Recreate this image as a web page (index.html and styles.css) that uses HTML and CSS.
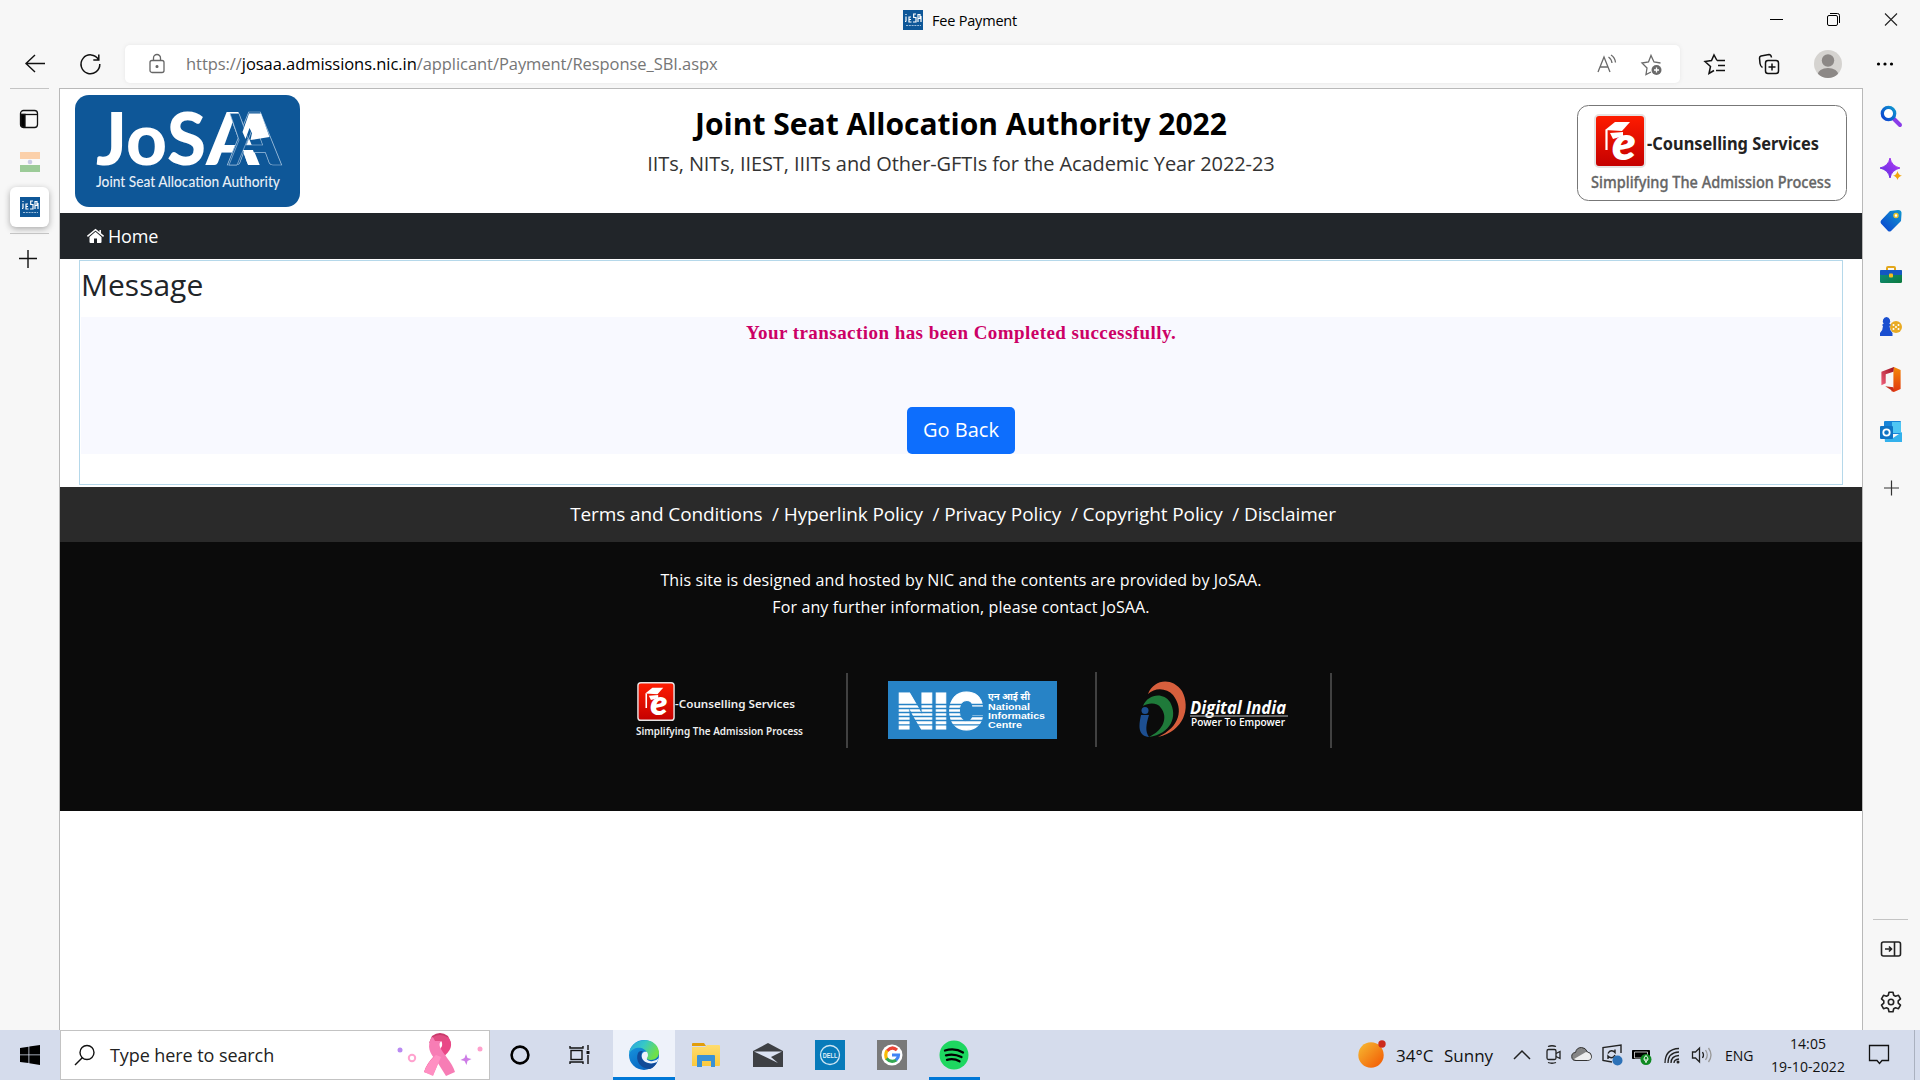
FILE: index.html
```html
<!DOCTYPE html>
<html lang="en">
<head>
<meta charset="utf-8">
<title>Fee Payment</title>
<link rel="stylesheet" href="styles.css">
</head>
<body>
<svg class="defs" width="0" height="0" aria-hidden="true">
  <defs>
    <linearGradient id="red" x1="0" y1="0" x2="0" y2="1"><stop offset="0" stop-color="#ff1c00"/><stop offset="1" stop-color="#c40000"/></linearGradient>
    <linearGradient id="blue" x1="0" y1="1" x2="1" y2="0"><stop offset="0" stop-color="#0a3fd0"/><stop offset="1" stop-color="#1098cf"/></linearGradient>
    <linearGradient id="purple" x1="0" y1="1" x2="1" y2="0"><stop offset="0" stop-color="#5b2be0"/><stop offset="1" stop-color="#b73cf5"/></linearGradient>
    <linearGradient id="green" x1="0" y1="0" x2="1" y2="1"><stop offset="0" stop-color="#0f8f88"/><stop offset="1" stop-color="#0c7a3c"/></linearGradient>
    <linearGradient id="office" x1="0" y1="0" x2="0" y2="1"><stop offset="0" stop-color="#f58a07"/><stop offset="1" stop-color="#e0360f"/></linearGradient>
    <linearGradient id="officeDark" x1="1" y1="0" x2="0" y2="1"><stop offset="0" stop-color="#9c0f1e"/><stop offset="1" stop-color="#f0607c"/></linearGradient>
    <linearGradient id="sun" x1="0" y1="0" x2="1" y2="1"><stop offset="0.1" stop-color="#f6b22e"/><stop offset="0.8" stop-color="#f3690b"/></linearGradient>
    <linearGradient id="edgeTop" x1="0" y1="0" x2="1" y2="0.4"><stop offset="0" stop-color="#2a9fe0"/><stop offset="0.5" stop-color="#36c8c8"/><stop offset="1" stop-color="#6fe04a"/></linearGradient>
    <linearGradient id="edgeLeft" x1="0" y1="0" x2="0.6" y2="1"><stop offset="0" stop-color="#1b9de2"/><stop offset="1" stop-color="#0663c0"/></linearGradient>
    <linearGradient id="folder" x1="0" y1="0" x2="0" y2="1"><stop offset="0" stop-color="#ffdc6e"/><stop offset="1" stop-color="#fbc93d"/></linearGradient>
    <linearGradient id="ribbon" x1="0" y1="0" x2="1" y2="1"><stop offset="0" stop-color="#fb86bd"/><stop offset="1" stop-color="#fb6faf"/></linearGradient>
    <symbol id="favicon" viewBox="0 0 20 20">
      <rect width="20" height="20" fill="#0e5798"/>
      <path d="M3 4v1M3 6.500v5M8 7H6v5h2.500M6 9.500h2M13 4h-2.300v3.500h2.300V12h-3M15 4v8M15 4.500h2v4h-2M18 6v6M2 11.500h1" stroke="#fff" stroke-width="1.200" fill="none"/>
      <path d="M3 15.500h15" stroke="#9dbedc" stroke-width="1" stroke-dasharray="2 0.800"/>
    </symbol>
    <symbol id="gradcap" viewBox="0 0 52 54">
      <rect x="1" y="1" width="50" height="52" rx="4" fill="url(#red)" stroke="#e6e3e3" stroke-width="2"/>
      <path d="M11 16L21 8h15l-8 9z" fill="#fff"/>
      <path d="M12.500 16v20" stroke="#fff" stroke-width="2.200"/>
      <path d="M16 19l13-1v4l-10 3z" fill="#fff"/>
      <text x="18" y="46" font-family="Lato, sans-serif" font-style="italic" font-weight="800" font-size="47" fill="#fff" textLength="24" lengthAdjust="spacingAndGlyphs">e</text>
    </symbol>
  </defs>
</svg>

<header class="titlebar">
  <div class="page-title"><svg width="20" height="20"><use href="#favicon"/></svg><span>Fee Payment</span></div>
  <div class="window-buttons">
    <svg width="57" height="40" viewBox="0 0 57 40"><path d="M22 19.500h13" stroke="#000"/></svg>
    <svg width="57" height="40" viewBox="0 0 57 40" fill="none" stroke="#000"><rect x="22.500" y="15.500" width="10" height="10" rx="1.500"/><path d="M25 13.500h7.500q2 0 2 2V23"/></svg>
    <svg width="58" height="40" viewBox="0 0 58 40"><path d="M23 13.500l12 12M35 13.500l-12 12" stroke="#222" stroke-width="1.100"/></svg>
  </div>
</header>

<div class="toolbar">
  <svg class="back" width="24" height="24" viewBox="0 0 24 24" fill="none" stroke="#111" stroke-width="1.400"><path d="M23 11.500H3.500M13 3L4 11.500l9 8.500"/></svg>
  <svg class="reload" width="24" height="24" viewBox="0 0 24 24" fill="none" stroke="#111" stroke-width="1.500"><path d="M20.500 7.500A9.400 9.400 0 1 0 21.800 12M20.800 2.500v5.500h-5.500"/></svg>
  <div class="address">
    <svg class="lock" width="18" height="20" viewBox="0 0 18 20" fill="none" stroke="#666" stroke-width="1.300"><rect x="2" y="6.500" width="14" height="12" rx="2"/><path d="M5.500 6.500V4a3.500 3.500 0 0 1 7 0v2.500"/><circle cx="9" cy="12.500" r="0.900" fill="#666"/></svg>
    <span class="url">https://<b>josaa.admissions.nic.in</b>/applicant/Payment/Response_SBI.aspx</span>
    <svg class="read" width="22" height="22" viewBox="0 0 22 22" fill="none" stroke="#6a6a6a" stroke-width="1.300"><path d="M2 19L8 4l6 15M4 14h8M12.500 4q3 2 3.500 6M15 2q4 2.500 4.500 7.500"/></svg>
    <svg width="24" height="24" viewBox="0 0 24 24" fill="none" stroke="#6a6a6a" stroke-width="1.300"><path d="M12 20l-5 2.500 1-6.500L3 11l6.500-1L12 3.500l3 6.500 6.500 1"/><circle cx="17.500" cy="18" r="5" fill="#6a6a6a" stroke="none"/><path d="M15 18h5M17.500 15.500v5" stroke="#fff"/></svg>
  </div>
  <svg class="fav" width="24" height="24" viewBox="0 0 24 24" fill="none" stroke="#111" stroke-width="1.500"><path d="M12 18.500l-5 3 1.500-7L3 9.500l6.500-1L12 3l3 5.500M15 8.500h8M16 13.500h7M14 18.500h9"/></svg>
  <svg class="coll" width="24" height="24" viewBox="0 0 24 24" fill="none" stroke="#111" stroke-width="1.500"><rect x="8.500" y="8.500" width="13" height="13" rx="2.500"/><path d="M15 11.500v7M11.500 15h7M5.500 15.500q-2-1-2.500-4L2.500 6Q2.500 4.500 4 4L12 2.500q2 0 2.500 3"/></svg>
  <svg class="avatar" width="28" height="28" viewBox="0 0 28 28"><defs><clipPath id="av"><circle cx="14" cy="14" r="14"/></clipPath></defs><g clip-path="url(#av)"><rect width="28" height="28" fill="#d5d3d0"/><circle cx="14" cy="10.500" r="6.200" fill="#8c8886"/><ellipse cx="14" cy="25" rx="10.500" ry="7" fill="#8c8886"/></g></svg>
  <svg class="more" width="18" height="6" viewBox="0 0 18 6"><circle cx="2.500" cy="3" r="1.600"/><circle cx="9" cy="3" r="1.600"/><circle cx="15.500" cy="3" r="1.600"/></svg>
</div>

<div class="workspace">
  <aside class="tabs">
    <hr>
    <svg class="tab-toggle" width="20" height="20" viewBox="0 0 20 20" fill="none" stroke="#111" stroke-width="1.300"><rect x="1.500" y="1.500" width="17" height="17" rx="3"/><path d="M2 5.500h16.500"/><path d="M2 5.500h4V18H4q-2 0-2-2z" fill="#000"/></svg>
    <svg class="flag" width="20" height="20"><rect width="20" height="7" fill="#fbd0aa"/><rect y="7" width="20" height="6" fill="#fafafa"/><rect y="13" width="20" height="7" fill="#9ccb98"/><circle cx="10" cy="10" r="2.300" fill="#c9cae4"/></svg>
    <div class="active-tab"><svg width="20" height="20"><use href="#favicon"/></svg></div>
    <hr>
    <svg class="new-tab" width="18" height="18" viewBox="0 0 18 18"><path d="M0 8.500h18M9 0v18" stroke="#111" stroke-width="1.400"/></svg>
  </aside>

  <main class="site">
    <div class="site-header">
      <svg class="josaa" width="225" height="112" viewBox="75 95 225 112">
        <rect x="75" y="95" width="225" height="112" rx="14" fill="#0e5798"/>
        <g font-family="Lato, sans-serif" font-weight="900" font-size="73" fill="#fff">
          <text y="165"><tspan x="96" textLength="31" lengthAdjust="spacingAndGlyphs">J</tspan><tspan x="126" textLength="41" lengthAdjust="spacingAndGlyphs">o</tspan><tspan x="167" textLength="39" lengthAdjust="spacingAndGlyphs">S</tspan><tspan x="206" textLength="53" lengthAdjust="spacingAndGlyphs">A</tspan></text>
          <text x="228" y="165" textLength="53" lengthAdjust="spacingAndGlyphs" fill="#0e5798" stroke="#9fbfdc" stroke-width=".7">A</text>
          <path d="M230 113.500h9l9 25-11 26.500h-8l10-25z" fill="#0e5798" stroke="#9fbfdc" stroke-width=".7"/>
          <path d="M249 113.500h12l8.500 23.500-19 3 1.500-7-2.500-5-4 11-3-7z"/>
          <path d="M243 150h10l5 15h-10z"/>
        </g>
        <text x="96" y="187" font-family="Lato, sans-serif" font-size="14.500" font-weight="500" fill="#e6eef6" textLength="184" lengthAdjust="spacingAndGlyphs">Joint Seat Allocation Authority</text>
      </svg>
      <div class="site-name">
        <h1>Joint Seat Allocation Authority 2022</h1>
        <p>IITs, NITs, IIEST, IIITs and Other-GFTIs for the Academic Year 2022-23</p>
      </div>
      <svg class="ecs" width="270" height="96" viewBox="1577 105 270 96">
        <rect x="1577.500" y="105.500" width="269" height="95" rx="11" fill="#fff" stroke="#777"/>
        <use href="#gradcap" x="1594" y="114" width="52" height="54"/>
        <text x="1647" y="150" font-family="Noto Sans, sans-serif" font-weight="700" font-size="17" fill="#222" textLength="172" lengthAdjust="spacingAndGlyphs">-Counselling Services</text>
        <text x="1591" y="188" font-family="Noto Sans, sans-serif" font-weight="500" font-size="15.500" fill="#666" stroke="#666" stroke-width=".3" textLength="240" lengthAdjust="spacingAndGlyphs">Simplifying The Admission Process</text>
      </svg>
    </div>
    <nav class="site-nav">
      <svg width="17" height="14" viewBox="0 0 17 14" fill="#fff"><path d="M8.500 2.800L2.500 8v5q0 1 1 1H7V9.500h3V14h3.500q1 0 1-1V8z"/><path d="M0.400 7.300L8.500 0.700l8.100 6.600M13.200 1v3" fill="none" stroke="#fff" stroke-width="1.500"/></svg>
      <span>Home</span>
    </nav>
    <section class="message">
      <h2>Message</h2>
      <div class="panel">
        <p>Your transaction has been Completed successfully.</p>
        <button>Go Back</button>
      </div>
    </section>
    <footer>
      <div class="links">Terms and Conditions&nbsp; / Hyperlink Policy&nbsp; / Privacy Policy&nbsp; / Copyright Policy&nbsp; / Disclaimer</div>
      <div class="credits">
        <p>This site is designed and hosted by NIC and the contents are provided by JoSAA.<br>For any further information, please contact JoSAA.</p>
        <div class="partners">
          <svg width="168" height="56" viewBox="636 683 168 56">
            <use href="#gradcap" x="637" y="683" width="38" height="39"/>
            <g font-family="Noto Sans, sans-serif" fill="#eee"><text x="675" y="709" font-weight="600" font-size="11.500" textLength="120" lengthAdjust="spacingAndGlyphs">-Counselling Services</text>
            <text x="636" y="736" font-weight="600" font-size="10" textLength="167" lengthAdjust="spacingAndGlyphs">Simplifying The Admission Process</text></g>
          </svg>
          <i></i>
          <svg width="169" height="58" viewBox="888 681 169 58">
            <rect x="888" y="681" width="169" height="58" fill="#2783c6"/>
            <text x="897" y="728.500" font-family="Inter, sans-serif" font-weight="900" font-size="50" fill="#fff" stroke="#fff" textLength="87" lengthAdjust="spacingAndGlyphs">NIC</text>
            <path d="M898 704.500h86M898 708.500h86M898 712.500h86M898 716.500h86M898 720.500h86M898 724.800h86" stroke="#2783c6" stroke-width="1.300"/>
            <g font-family="Liberation Sans, sans-serif" font-weight="700" font-size="9" fill="#fff"><text x="988" y="700" font-family="Noto Sans, DejaVu Sans, sans-serif" textLength="42" lengthAdjust="spacingAndGlyphs">एन आई सी</text><text x="988" y="710" textLength="42" lengthAdjust="spacingAndGlyphs">National</text><text x="988" y="719" textLength="57" lengthAdjust="spacingAndGlyphs">Informatics</text><text x="988" y="728" textLength="34" lengthAdjust="spacingAndGlyphs">Centre</text></g>
          </svg>
          <i class="up"></i>
          <svg width="150" height="56" viewBox="1138 683 150 56">
            <path d="M1148 695c6-15 24-17 34-3 9 17 2 40-24 46 22-10 26-28 15-42-6-7-18-8-25-1z" fill="#d75f3d"/>
            <path d="M1143 707c5-12 20-14 27-4 8 14 1 32-21 35 15-7 19-20 12-29-4-6-13-5-18-2z" fill="#1f7a3a"/>
            <circle cx="1145" cy="711.500" r="3.500" fill="#1d4f91"/><path d="M1141 716h8c-3 10-4 16 0 22-10-1-11-9-8-22z" fill="#1d4f91"/>
            <g font-family="Open Sans, sans-serif" fill="#fff"><text x="1190" y="714.500" font-weight="700" font-style="italic" font-size="17" textLength="96" lengthAdjust="spacingAndGlyphs">Digital India</text><path d="M1190 717h98" stroke="#bbb"/><text x="1191" y="727" font-size="10" font-weight="600" textLength="94" lengthAdjust="spacingAndGlyphs">Power To Empower</text></g>
          </svg>
          <i></i>
        </div>
      </div>
    </footer>
  </main>

  <aside class="tools">
    <svg viewBox="0 0 22 22"><path d="M14 14l6 6" stroke="#8a3be8" stroke-width="4" stroke-linecap="round"/><circle cx="8.500" cy="8.500" r="6.200" fill="#fff" stroke="url(#blue)" stroke-width="3.300"/></svg>
    <svg viewBox="0 0 22 22"><path d="M10 0q1.500 8 10 10-8.500 2-10 10-1.500-8-10-10 8.500-2 10-10z" fill="url(#purple)" stroke="url(#purple)" stroke-linejoin="round"/><path d="M17.500 13q.8 4 4.500 4.700-3.700.8-4.500 4.300-.8-3.500-4.500-4.300 3.700-.7 4.500-4.700z" fill="#f2a50c"/></svg>
    <svg viewBox="0 0 22 22"><path d="M10 1l8-1q4 0 3.500 4L21 11 11 21q-1.500 1-3 0l-7-7.500q-1-1.500 0-3z" fill="url(#blue)"/><circle cx="16" cy="5.500" r="2" fill="#fff" stroke="#e7c32e" stroke-width="1.500"/></svg>
    <svg viewBox="0 0 22 22"><path d="M7 8V5q0-1 1-1h6q1 0 1 1v3" fill="none" stroke="#e3a71c" stroke-width="2"/><rect y="7" width="22" height="13" rx="1.500" fill="url(#green)"/><rect y="7" width="22" height="5" rx="1" fill="#1457c2"/><rect x="9" y="10.500" width="4" height="4" rx="1" fill="#f5bd1c"/></svg>
    <svg viewBox="0 0 22 22"><circle cx="16" cy="11" r="6" fill="#e9ab24"/><g fill="#fff"><circle cx="16" cy="11" r="1"/><circle cx="13.500" cy="9" r="1"/><circle cx="18.500" cy="9" r="1"/><circle cx="13.500" cy="13" r="1"/><circle cx="18.500" cy="13" r="1"/></g><path d="M6.500 1a4 4 0 0 1 2.800 6.500L11 9 9.500 10q0 4 3 7v3H0v-3q3-3 3-7L2 9l1.700-1.500A4 4 0 0 1 6.500 1z" fill="#1a4fd0"/></svg>
    <svg viewBox="0 0 22 26"><path d="M14 0l7 3v20l-7 3-3-1 2.500-3V0z" fill="url(#office)"/><path d="M14 0L1 5v14l4.500-2V7.500L13.500 5z" fill="url(#officeDark)"/><path d="M5 20l8.500 1v4.500z" fill="#c52f1c"/></svg>
    <svg viewBox="0 0 22 22"><path d="M5 0h15q1 0 1 1v12H4V1q0-1 1-1z" fill="#1784d8"/><path d="M12 1h9v11h-9z" fill="#4fc6f4"/><path d="M4 11l9 6 9-6v10H5z" fill="#33b1ec"/><rect y="5" width="13" height="13" rx="1" fill="#0f73c4"/><circle cx="6.500" cy="11.500" r="3.200" fill="none" stroke="#fff" stroke-width="1.800"/></svg>
    <svg class="plus" viewBox="0 0 22 22"><path d="M4 11h15M11.500 3.500v15" stroke="#333" stroke-width="1.200"/></svg>
    <div class="tools-bottom">
      <hr>
      <svg viewBox="0 0 22 22" fill="none" stroke="#222" stroke-width="1.600"><rect x="1.500" y="4" width="19" height="14" rx="2"/><path d="M14.500 4v14M5 11h6M9 8.500l2.500 2.500L9 13.500"/></svg>
      <svg viewBox="0 0 22 22" fill="none" stroke="#222" stroke-width="1.600"><circle cx="11" cy="11" r="2.700"/><path d="M9 1.200h4l.7 3 1.800 1 3-.9 2 3.500-2.300 2.100v2.200l2.300 2.100-2 3.500-3-.9-1.800 1-.7 3H9l-.7-3-1.800-1-3 .9-2-3.500 2.300-2.100V9.900L1.500 7.800l2-3.500 3 .9 1.800-1z" stroke-linejoin="round"/></svg>
    </div>
  </aside>
</div>

<div class="taskbar">
  <div class="start"><svg width="20" height="20" viewBox="0 0 20 20"><path d="M0 3l8.500-1.200V9.500H0zM9.300 1.600L20 0v9.500H9.300zM0 10.300h8.500V18L0 17zM9.300 10.300H20V20l-10.700-1.700z"/></svg></div>
  <div class="search">
    <svg width="22" height="22" viewBox="0 0 22 22" fill="none" stroke="#111" stroke-width="1.400"><circle cx="13" cy="8.500" r="7"/><path d="M8.500 13.500L1 21"/></svg>
    <span>Type here to search</span>
    <svg class="ribbon" width="90" height="46" viewBox="395 1033 90 46">
      <path d="M432 1037q8-6 16 0l3 7q-11-7-22 0z" fill="#c93a6b"/><path d="M448 1038c8 10-1 17-9 24l-6 14-9-3c4-13 15-19 18-26 1-5-2-6-4-7z" fill="#e94886"/><path d="M432 1038c-6 9-2 17 4 23l10 16 9-4c-3-10-12-18-15-25-1-4 0-5 2-6z" fill="#f77db5"/><path d="M441 1058l-8 19-9-4q4-11 12-17z" fill="#ff8fc2"/><path d="M433 1038q7-4 14 0l-2 4h-10z" fill="#e04d82"/>
      <circle cx="400" cy="1051" r="2.500" fill="#b98af2"/><circle cx="412" cy="1059" r="3.200" fill="none" stroke="#ffa3cf" stroke-width="2"/><circle cx="480" cy="1050" r="2.500" fill="#ffa0cc"/><path d="M466 1055l1.500 4 4 1-4 2-1 4-2-4-4-1 4-2z" fill="#cd7ce6"/>
    </svg>
  </div>
  <div class="app narrow"><svg width="20" height="20" viewBox="0 0 20 20"><circle cx="10" cy="10" r="8.400" fill="none" stroke="#000" stroke-width="2.600"/></svg></div>
  <div class="app narrow"><svg width="22" height="20" viewBox="0 0 22 20" fill="none" stroke="#111" stroke-width="1.400"><rect x="2" y="5.500" width="11" height="9"/><path d="M1 1v2h13V1M1 19v-2h13v2M19 0v5M19 10v9"/><path d="M17.500 7.500h3" stroke-width="3"/></svg></div>
  <div class="app active"><svg width="30" height="30" viewBox="0 0 30 30"><circle cx="15" cy="15" r="15" fill="url(#edgeLeft)"/><path d="M0 14C1-3 28-5 30 12c0 8-8 9-12 7-2-2 1-3 0-6-2-6-13-8-18 1z" fill="url(#edgeTop)"/><path d="M9 13c-3 7 2 16 12 16 3-1 6-4 7-7-5 3-13 1-15-4-1-3-1-5 1-7-2 0-4 0-5 2z" fill="#114a98"/><path d="M18 12q2 3 0 6-1 2 3 3 5 1 9-3l-2 4c-6 3-13 1-15-4-1-4 1-7 5-6z" fill="#eef2fa"/></svg></div>
  <div class="app"><svg width="28" height="24" viewBox="0 0 28 24"><path d="M0 1q0-1 1-1h11l2 3H0z" fill="#e29d0a"/><path d="M0 4h13l2-2h12q1 0 1 1v19q0 1-1 1H0z" fill="url(#folder)"/><path d="M5 24V13q0-1 1-1h16q1 0 1 1v11h-4v-6h-9v6z" fill="#3a91d6"/></svg></div>
  <div class="app"><svg width="30" height="24" viewBox="0 0 30 24"><path d="M0 8L15 0l15 8v16H0z" fill="#3e4044"/><path d="M1 8.500h28l-11 5.500 7 6z" fill="#dbe2f2"/></svg></div>
  <div class="app"><svg width="30" height="30" viewBox="0 0 30 30"><rect width="30" height="30" fill="#087bba"/><circle cx="15" cy="15" r="9.500" fill="none" stroke="#cfe6f3" stroke-width="1.300"/><text x="7.800" y="17.500" font-family="Liberation Sans, sans-serif" font-size="7" font-weight="700" fill="#e2f0f8" textLength="14.500" lengthAdjust="spacingAndGlyphs">DELL</text></svg></div>
  <div class="app"><svg width="30" height="30" viewBox="0 0 30 30" fill="none" stroke-width="3.200"><rect width="30" height="30" fill="#797979"/><circle cx="15" cy="15" r="10.500" fill="#fff"/><path d="M10 11q5-5.500 10-1" stroke="#ea4335"/><path d="M10 10.500q-2.500 4.500 0 9" stroke="#fbbc05"/><path d="M9.500 18.500q4.500 5 10 1.500" stroke="#34a853"/><path d="M15 15h6.500q0 3-2.500 5" stroke="#4285f4"/></svg></div>
  <div class="app running"><svg width="30" height="30" viewBox="0 0 30 30"><circle cx="15" cy="15" r="14.500" fill="#1ed760"/><path d="M6 10.500q10-3 18 2M7 15.300q8-2 15.500 1.700M8 19.800q7-1.700 12.500 1.500" fill="none" stroke="#000" stroke-width="2.300" stroke-linecap="round"/></svg></div>
  <div class="tray">
    <svg class="weather" width="32" height="32" viewBox="0 0 32 32"><circle cx="15" cy="16" r="12.700" fill="url(#sun)"/><circle cx="26" cy="5" r="3.700" fill="#cc2a1c"/></svg>
    <span class="temp">34°C</span><span class="sky">Sunny</span>
    <div class="icons">
      <svg viewBox="0 0 30 30"><path d="M7 19l8-8 8 8" fill="none" stroke="#222" stroke-width="1.500"/></svg>
      <svg viewBox="0 0 30 30" fill="none" stroke="#222" stroke-width="1.300"><rect x="10" y="9.500" width="9" height="10" rx="1.500"/><path d="M19 13.500l4-2v7l-4-2M11 6.500q4-1.500 8 0M11 22.500q4 1.500 8 0"/></svg>
      <svg viewBox="0 0 30 30"><path d="M9 20.500a4 4 0 0 1-.5-8q1-5 6-5 4 0 6 4.500 4 .5 4 4.500t-4 4z" fill="#858585" stroke="#333"/><path d="M7 19l12-7q5 1 5 5 0 3-3 3H9z" fill="#eee"/></svg>
      <svg viewBox="0 0 30 30" fill="none" stroke="#222" stroke-width="1.400"><path d="M24 13V5L6 7.500v13l9 1.500M11 13.500q2-4 6-2l1 1V9.500M18 15q-2 4-6 2l-1-1v3"/><circle cx="20.500" cy="20.500" r="5" fill="#2d72b8" stroke="none"/></svg>
      <svg viewBox="0 0 30 30"><path d="M5.500 10.500h17v8h-17z" fill="#000" stroke="#000"/><path d="M7.500 12h13v6h-13z" stroke="#fff" stroke-width=".7"/><circle cx="19" cy="19.500" r="5.500" fill="#0e8a22"/><path d="M19 23v-4M19 15.500q-4 4 0 6 4-2 0-6z" fill="none" stroke="#fff"/></svg>
      <svg viewBox="0 0 30 30" fill="none" stroke="#222" stroke-width="1.300"><path d="M8 23Q8 9 22 8.500M11 23Q11 12.500 22 12M14 23q0-7 8-7.500M17 23q0-3.500 5-4"/><circle cx="21" cy="22" r="1.500" fill="#222" stroke="none"/></svg>
      <svg viewBox="0 0 30 30" fill="none" stroke="#222" stroke-width="1.300"><path d="M5.500 12h3l4-4v14l-4-4h-3z"/><path d="M15.500 12q2 3 0 6"/><path d="M18.500 10q3.500 5 0 10M21.500 8q5 7 0 14" stroke="#999"/></svg>
    </div>
    <span class="lang">ENG</span>
    <div class="clock"><span>14:05</span><span>19-10-2022</span></div>
    <svg class="notice" width="22" height="22" viewBox="0 0 22 22" fill="none" stroke="#111" stroke-width="1.300"><path d="M1.500 1.500h19v15H14l-2.500 3-2.500-3H1.500z"/></svg>
    <div class="peek"></div>
  </div>
</div>
</body>
</html>
```
FILE: styles.css
```css
* { box-sizing: border-box; }
body { margin: 0; width: 1920px; height: 1080px; overflow: hidden; display: flex; flex-direction: column; background: #f7f7f7; color: #000; font-family: "Open Sans", "Noto Sans", sans-serif; }
svg { display: block; flex: none; overflow: visible; }
span, h1, p { white-space: nowrap; }
h1, h2, p { margin: 0; font-weight: 400; }
hr { width: 39px; height: 1px; margin: 0; border: 0; background: #c4c4c4; flex: none; }
.defs { position: absolute; }

.titlebar { height: 40px; display: grid; grid-template-columns: 903px 1fr 172px; align-items: center; }
.page-title { grid-column: 2; display: flex; align-items: center; gap: 9px; font-size: 14.500px; letter-spacing: -0.2px; }
.window-buttons { display: flex; }

.toolbar { height: 48px; display: flex; align-items: center; padding: 0 25px 0 22px; }
.reload { margin-left: 32px; }
.address { width: 1555px; height: 38px; margin: -1px 0 0 23px; display: flex; align-items: center; padding: 0 17px 0 23px; background: #fff; border-radius: 5px; box-shadow: 0 0 4px #e6e6e6; }
.lock { margin-right: 1px; }
.url { margin-left: 19px; margin-right: auto; font-size: 16.500px; letter-spacing: -0.060px; color: #767676; }
.url b { font-weight: 400; color: #000; }
.read { margin-right: 21px; }
.fav { margin-left: 22px; }
.coll { margin-left: 31px; }
.avatar { margin-left: 33px; }
.more { margin-left: auto; margin-right: 1px; }

.workspace { height: 942px; display: flex; }
.tabs { width: 59px; display: flex; flex-direction: column; align-items: flex-start; padding-left: 10px; }
.tab-toggle { margin: 20px 0 0 9px; }
.flag { margin: 23px 0 15px 10px; }
.active-tab { width: 39px; height: 40px; margin-bottom: 6px; display: grid; place-items: center; background: #fff; border-radius: 6px; box-shadow: 0 2px 6px #aaa; }
.new-tab { margin: 16px 0 0 9px; }

.site { width: 1804px; border: solid #b9b9b9; border-width: 1px 1px 0; background: #fff; color: #212529; }
.site-header { height: 124px; display: flex; align-items: flex-start; justify-content: space-between; padding: 6px 15px 0; }
.site-name { text-align: center; padding: 6px 0 0 45px; color: #000; }
.site-name h1 { font-size: 30px; line-height: 45px; font-weight: 700; }
.site-name p { font-size: 20px; line-height: 35px; letter-spacing: -0.090px; color: #333; }
.ecs { margin-top: 10px; }
.site-nav { height: 46px; display: flex; align-items: center; gap: 4px; padding-left: 27px; background: #212529; color: #fff; font-size: 18px; letter-spacing: -0.2px; }
.message { height: 225px; margin: 1px 19px 2px; border: 1px solid #b5d8ea; padding: 0 1px; }
.message h2 { height: 56px; font-size: 30px; line-height: 48px; }
.panel { height: 137px; display: flex; flex-direction: column; align-items: center; justify-content: space-between; background: #f8f9ff; }
.panel p { font: 700 19px/32px "Liberation Serif", serif; letter-spacing: 0.450px; color: #cc0066; }
.panel button { height: 47px; width: 108px; padding: 0 0 2px; border: 0; border-radius: 5px; background: #0d6efd; color: #fff; font: 20px/45px "Open Sans", sans-serif; }
.links { height: 55px; padding-right: 16px; text-align: center; background: #2a2a2a; color: #fff; font-size: 19px; letter-spacing: -0.110px; line-height: 55px; }
.credits { height: 269px; background: #0b0b0b; color: #fff; text-align: center; font-size: 16px; letter-spacing: 0.110px; line-height: 27px; padding-top: 25px; }
.partners { display: flex; justify-content: center; align-items: center; height: 76px; margin-top: 51px; padding-left: 46px; letter-spacing: 0; }
.partners i { width: 2px; height: 75px; margin: 1px 40px 0 42px; background: #414141; }
.partners i.up { margin-top: -1px; margin-left: 38px; margin-right: 41px; }
.partners i:last-child { margin-right: 0; }

.tools { width: 57px; display: flex; flex-direction: column; align-items: center; padding: 2px 2px 0 0; }
.tools svg { width: 22px; height: 22px; margin: 15.300px 0; }
.tools svg:nth-child(6) { height: 25px; margin: 13.800px 0; }
.tools svg.plus { margin-top: 19px; }
.tools-bottom { margin-top: auto; height: 111px; display: flex; flex-direction: column; align-items: center; }
.tools-bottom hr { width: 35px; }
.tools-bottom svg { margin: 18px 0 13px; }

.taskbar { height: 50px; display: flex; background: #d5dcec; }
.start { width: 60px; display: grid; place-items: center; }
.search { width: 430px; display: flex; align-items: center; padding-left: 13px; background: #fff; border: 1px solid #c3c3c3; font-size: 18px; letter-spacing: -0.080px; color: #222; }
.search span { margin-left: 14px; }
.ribbon { margin-left: auto; margin-right: 4px; }
.app { width: 62px; display: grid; place-items: center; }
.app.narrow { width: 60px; }
.app.active { width: 62px; margin-left: 3px; padding-top: 3px; background: #eef2fa; border-bottom: 3px solid #0078d7; }
.running { background: linear-gradient(#0078d7, #0078d7) 50% 100% / 51px 3px no-repeat; }
.tray { flex: 1; display: flex; align-items: center; padding-left: 371px; color: #111; font-size: 17px; }
.temp { width: 48px; margin-left: 8px; }
.sky { width: 63px; }
.icons { display: flex; }
.icons svg { width: 30px; height: 30px; }
.lang { width: 38px; margin-left: 8px; font-size: 14px; }
.clock { width: 90px; display: flex; flex-direction: column; align-items: center; font-size: 14px; letter-spacing: 0.100px; line-height: 23px; }
.notice { margin-left: 15px; }
.peek { margin-left: auto; margin-right: 5px; width: 1px; height: 50px; background: #aab1bf; }
```
